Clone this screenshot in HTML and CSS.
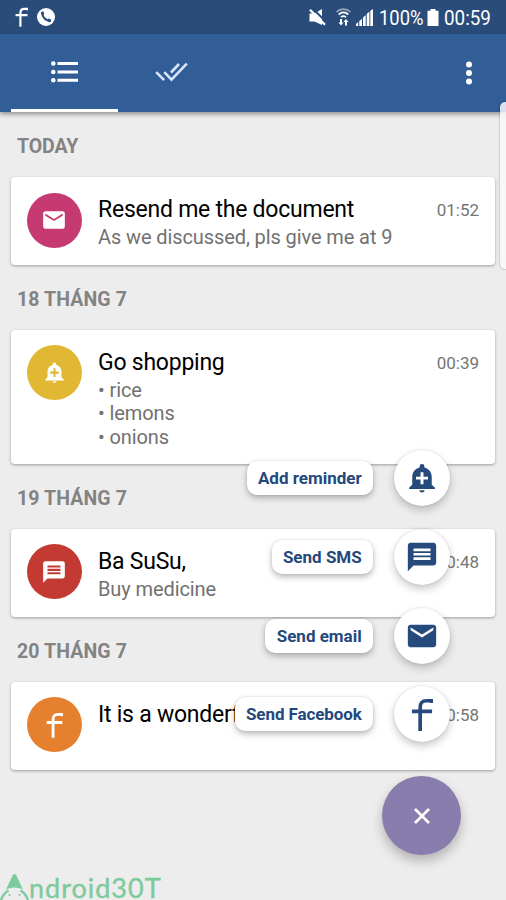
FILE: index.html
```html
<!DOCTYPE html>
<html lang="vi">
<head>
<meta charset="utf-8">
<title>Reminders</title>
<link rel="stylesheet" href="styles.css">
</head>
<body>
<svg class="defs" aria-hidden="true">
  <symbol id="mail" viewBox="0 0 24 24"><path d="M20 4H4c-1.100 0-2 .9-2 2v12c0 1.100.9 2 2 2h16c1.100 0 2-.9 2-2V6c0-1.100-.9-2-2-2zm0 4l-8 5-8-5V6l8 5 8-5v2z"/></symbol>
  <symbol id="bell" viewBox="0 0 24 24"><path fill-rule="evenodd" d="M10 21.200h4c0 .9-.8 1.600-2 1.600s-2-.7-2-1.600zM19.300 17V11c0-3.500-2.300-6.100-5.500-6.900V3.300a1.800 1.800 0 0 0-3.600 0v.8C7 4.900 4.700 7.500 4.700 11v6L2.300 19.300v1h19.400v-1zM16.500 13.200h-3.400v3.400h-2.200v-3.400H7.500V11h3.400V7.600h2.200V11h3.400z"/></symbol>
  <symbol id="chat" viewBox="0 0 24 24"><path fill-rule="evenodd" d="M20 2H4c-1.100 0-2 .9-2 2v18l4-4h14c1.100 0 2-.9 2-2V4c0-1.100-.9-2-2-2zM6 6h12v1.900H6zm0 3.100h12V11H6zm0 3.100h12v1.900H6z"/></symbol>
  <symbol id="fb" viewBox="0 0 24 36"><path fill="none" stroke="currentColor" stroke-width="4" d="M10 36V10.500C10 4.500 12.500 3 17 3h5.500v2.500M1 14.500h22"/></symbol>
</svg>
<div class="screen">
  <header class="status">
    <div class="status-left">
      <svg class="st-f"><use href="#fb"/></svg>
      <svg class="st-phone" viewBox="0 0 18 18"><circle cx="9" cy="9" r="9" fill="#fff"/><path fill="none" stroke="#294c7b" stroke-width="2.200" stroke-linecap="round" d="M5.300 5.200C5.300 9 9 12.900 12.900 12.900"/><path stroke="#294c7b" stroke-width="3" d="M4.300 5.700l2.500-1M11.300 13.500l1.700-2.300"/></svg>
    </div>
    <div class="status-right">
      <svg class="st-mute" viewBox="0 0 17 17"><path fill="#fff" d="M.5 4.500h5L13 0v16l-7.500-3.500h-5z"/><path stroke="#294c7b" stroke-width="2" d="M3.500-.8l15 15"/><path stroke="#fff" stroke-width="2.300" d="M1 .8l15 15"/></svg>
      <svg class="st-wifi" viewBox="0 0 15 18"><g fill="none" stroke="#fff" stroke-width="1.700"><path opacity=".5" d="M.5 4C4.500.2 10.500.2 14.500 4"/><path d="M2.700 6.500c3-2.600 6.600-2.600 9.600 0M5 9.200c1.800-1.400 3.200-1.400 5 0"/></g><path fill="#fff" d="M4 11h2v3.500h1.500l-2.500 3-2.500-3H4zM9 17.500h2V14h1.500L10 11l-2.500 3H9z"/></svg>
      <svg class="st-signal" viewBox="0 0 17 17"><path fill="#fff" d="M0 15l2.200-2v4H0zM3.300 12l2.700-2.300V17H3.300zM7 8.500l2.700-2.300V17H7zM10.700 5l2.700-2.400V17h-2.700zM14.300 1.800L17 0v17h-2.700z"/></svg>
      <span class="pct">100%</span>
      <svg class="st-bat" viewBox="0 0 11 17"><path fill="#fff" d="M3 0h5v1.800h3V17H0V1.800h3z"/></svg>
      <span class="clock">00:59</span>
    </div>
  </header>
  <nav class="appbar">
    <div class="tab active"><svg class="i-list" viewBox="0 0 27 22"><g fill="#fff"><circle cx="2.300" cy="2.500" r="2.300"/><circle cx="2.300" cy="11" r="2.300"/><circle cx="2.300" cy="19.300" r="2.300"/><path d="M6.500 1H27v3H6.500zM6.500 9.500H27v3H6.500zM6.500 17.800H27v3H6.500z"/></g></svg></div>
    <div class="tab"><svg class="i-done" viewBox="0 0 33 20"><g fill="none" stroke="#d7e5fb" stroke-width="2.600"><path d="M1.200 10.200l8 8M9.300 10.200l7.200 7.500L31.800 1.700M16 10.500l8-8.500"/></g></svg></div>
    <svg class="i-more" viewBox="0 0 6 24"><g fill="#fff"><circle cx="3" cy="3.500" r="3"/><circle cx="3" cy="12" r="3"/><circle cx="3" cy="20.500" r="3"/></g></svg>
  </nav>
  <main>
    <h2 class="today">TODAY</h2>
    <article class="card">
      <div class="avatar pink"><svg class="a24"><use href="#mail"/></svg></div>
      <div class="body"><h3>Resend me the document</h3><p>As we discussed, pls give me at 9</p></div>
      <time>01:52</time>
    </article>
    <h2>18 THÁNG 7</h2>
    <article class="card">
      <div class="avatar yellow"><svg class="a24"><use href="#bell"/></svg></div>
      <div class="body"><h3>Go shopping</h3><p>• rice<br>• lemons<br>• onions</p></div>
      <time>00:39</time>
    </article>
    <h2>19 THÁNG 7</h2>
    <article class="card">
      <div class="avatar red"><svg class="a24"><use href="#chat"/></svg></div>
      <div class="body"><h3>Ba SuSu,</h3><p>Buy medicine</p></div>
      <time>00:48</time>
    </article>
    <h2>20 THÁNG 7</h2>
    <article class="card">
      <div class="avatar orange"><svg class="a-f"><use href="#fb"/></svg></div>
      <div class="body"><h3>It is a wonderf</h3></div>
      <time>00:58</time>
    </article>
  </main>
  <div class="edge"></div>
  <div class="dial">
    <div class="row"><span class="label">Add reminder</span><div class="mini"><svg class="m32"><use href="#bell"/></svg></div></div>
    <div class="row"><span class="label">Send SMS</span><div class="mini"><svg class="m32"><use href="#chat"/></svg></div></div>
    <div class="row"><span class="label">Send email</span><div class="mini"><svg class="m32"><use href="#mail"/></svg></div></div>
    <div class="row"><span class="label last">Send Facebook</span><div class="mini"><svg class="m-f"><use href="#fb"/></svg></div></div>
    <div class="fab"><svg class="i-x" viewBox="0 0 16 16"><path stroke="#fff" stroke-width="2.600" d="M1 1l14 14M15 1L1 15"/></svg></div>
  </div>
  <div class="mark"><svg class="mark-a" viewBox="0 0 29 26"><path fill="#7dcb9c" d="M14.500 0c1 0 1.500.8 2 1.700L23 15.500c-5-2.700-12-2.700-17 0L12.500 1.700C13 .8 13.500 0 14.500 0z"/><path fill="none" stroke="#7dcb9c" stroke-width="2.400" d="M1 26c1.500-4.500 4-7.500 7.500-9.500M28 26c-1.500-4.500-4-7.500-7.500-9.500"/><circle cx="9.500" cy="21" r="1" fill="#7dcb9c"/><circle cx="19.500" cy="21" r="1" fill="#7dcb9c"/></svg><span>ndroid30T</span></div>
</div>
</body>
</html>
```
FILE: styles.css
```css
* { box-sizing: border-box; }
body { margin: 0; font-family: Roboto, "Liberation Sans", sans-serif; }
svg { display: block; overflow: visible; fill: currentColor; }
.defs { position: absolute; width: 0; height: 0; }
.screen { position: relative; width: 506px; height: 900px; background: #ededed; overflow: hidden; }

.status { height: 34px; background: #294c7b; color: #fff; display: flex; justify-content: space-between; align-items: center; padding: 0 14px 0 15px; }
.status-left, .status-right { display: flex; align-items: center; }
.st-f { width: 13px; height: 20px; }
.st-phone { width: 18px; height: 18px; margin-left: 9px; }
.st-mute { width: 17px; height: 17px; }
.st-wifi { width: 15px; height: 18px; margin-left: 10px; }
.st-signal { width: 17px; height: 17px; margin-left: 5px; }
.pct, .clock { font-size: 20px; white-space: nowrap; line-height: 34px; padding-top: 2px; transform-origin: left center; }
.pct { width: 44px; margin-left: 6px; transform: scaleX(.92); }
.st-bat { width: 12px; height: 17px; margin-left: 4px; }
.clock { width: 48px; margin-left: 5px; transform: scaleX(.94); }

.appbar { position: relative; height: 78px; background: #315e97; display: flex; align-items: center; padding: 0 34px 0 11px; box-shadow: 0 2px 5px rgba(0,0,0,.42); }
.tab { width: 107px; height: 78px; display: flex; align-items: center; justify-content: center; border-bottom: 3px solid transparent; }
.tab.active { border-color: #fff; }
.i-list { width: 27px; height: 22px; }
.i-done { width: 33px; height: 20px; }
.i-more { width: 6px; height: 24px; margin-left: auto; }

main { padding: 0 11px; }
h2 { margin: 0; height: 65px; padding-left: 6px; font-size: 19.500px; line-height: 70px; font-weight: 700; color: #838383; letter-spacing: .1px; }
h2.today { letter-spacing: -.1px; }
.card { display: flex; align-items: flex-start; min-height: 88px; background: #fff; border-radius: 4px; padding: 15px 16px 0 15.500px; box-shadow: 0 1px 3px rgba(0,0,0,.35); }
.card:nth-of-type(2) { height: 134px; }
.avatar { width: 55px; height: 55px; border-radius: 50%; color: #fff; display: flex; align-items: center; justify-content: center; }
.pink { background: #c53a71; margin-top: .5px; }
.yellow { background: #e1b834; }
.red { background: #c23a31; }
.orange { background: #e5802f; }
.a24 { width: 26px; height: 26px; }
.a-f { width: 17px; height: 26px; }
.yellow .a24 { width: 23px; height: 23px; }
.body { flex: 1; margin-left: 16.500px; white-space: nowrap; padding-top: 3px; }
h3 { margin: 0; font-size: 23px; font-weight: 400; line-height: 30px; color: #000; letter-spacing: -.24px; }
p { margin: 1px 0 0; font-size: 20px; line-height: 23.300px; color: #717171; letter-spacing: -.1px; }
time { font-size: 17px; line-height: 20px; margin-top: 8px; color: #757575; }

.edge { position: absolute; left: 500px; top: 102px; width: 12px; height: 167px; border-radius: 5px; background: rgba(248,248,252,.85); box-shadow: 0 0 2px rgba(0,0,0,.45); }

.dial { position: absolute; right: 45px; top: 450px; display: flex; flex-direction: column; align-items: flex-end; gap: 22.800px; }
.row { display: flex; align-items: center; gap: 20.500px; padding-right: 11.500px; }
.label { height: 34px; padding: 0 11.300px; border-radius: 10px; background: #fff; color: #24487b; font-size: 17px; line-height: 35px; font-weight: 700; box-shadow: 0 3px 6px rgba(0,0,0,.28), 0 0 2px rgba(0,0,0,.12); }
.label.last { letter-spacing: -.1px; }
.mini { width: 56px; height: 56px; border-radius: 50%; background: #fff; color: #274a7d; display: flex; align-items: center; justify-content: center; box-shadow: 0 4px 8px rgba(0,0,0,.22), 0 0 2px rgba(0,0,0,.14); }
.m32 { width: 34px; height: 34px; }
.m-f { width: 22px; height: 33px; }
.row:first-child .m32 { width: 32px; height: 32px; }
.fab { width: 79px; height: 79px; margin-top: 11px; border-radius: 50%; background: #897dae; display: flex; align-items: center; justify-content: center; box-shadow: 0 6px 12px rgba(0,0,0,.25); }
.i-x { width: 16px; height: 16px; }

.mark { position: absolute; left: 0; bottom: 0; display: flex; align-items: flex-end; color: #7dcb9c; }
.mark-a { width: 29px; height: 26px; }
.mark span { font-family: Lato, sans-serif; font-size: 27px; line-height: 28px; height: 26px; letter-spacing: 1px; -webkit-text-stroke: .4px #7dcb9c; white-space: nowrap; }
```
